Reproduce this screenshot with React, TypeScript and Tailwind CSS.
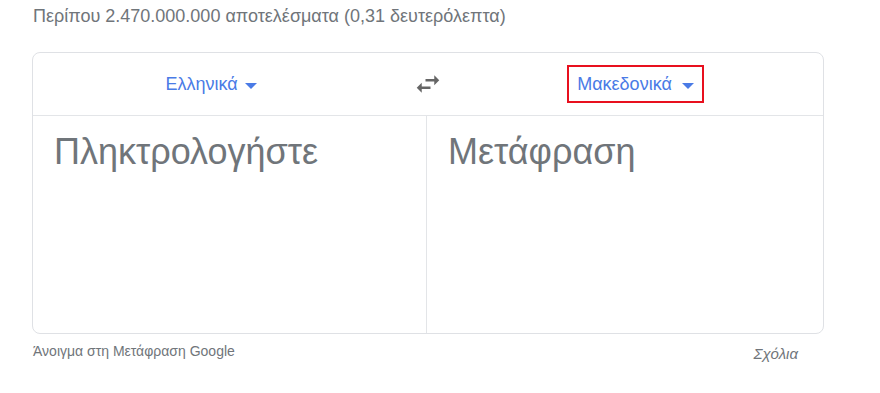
import React from "react";

function Caret() {
  return (
    <span className="inline-block w-0 h-0 border-l-[6px] border-r-[6px] border-t-[6px] border-l-transparent border-r-transparent border-t-[#4a7be6] mt-[3px]" />
  );
}

function SwapIcon() {
  return (
    <svg width="30" height="30" viewBox="0 0 24 24" fill="#666666">
      <path d="M6.99 11L3 15l3.99 4v-3H14v-2H6.99v-3zM21 9l-3.99-4v3H10v2h7.01v3L21 9z" />
    </svg>
  );
}

export default function App() {
  return (
    <div
      className="w-[880px] h-[393px] bg-white overflow-hidden"
      style={{ fontFamily: '"Liberation Sans", Arial, sans-serif' }}
    >
      <div className="pl-[33px] pt-[5px] text-[18px] leading-[22px] text-[#70757a]">
        Περίπου 2.470.000.000 αποτελέσματα (0,31 δευτερόλεπτα)
      </div>
      <div className="ml-[32px] mt-[25px] w-[792px] h-[282px] border border-[#dfe1e5] rounded-[8px] flex flex-col">
        <div className="h-[63px] border-b border-[#e3e5e8] flex items-center">
          <div className="w-[356px] flex items-center justify-center">
            <div className="flex items-center gap-[7px] text-[18px] text-[#4a7be6]">
              <span>Ελληνικά</span>
              <Caret />
            </div>
          </div>
          <div className="w-[78px] flex items-center justify-center">
            <SwapIcon />
          </div>
          <div className="flex-1 flex items-center justify-center pr-[19px]">
            <div className="flex items-center gap-[10px] text-[18px] text-[#4a7be6] border-2 border-[#e8101e] h-[38px] px-[8px]">
              <span>Μακεδονικά</span>
              <Caret />
            </div>
          </div>
        </div>
        <div className="flex-1 flex">
          <div className="w-[394px] border-r border-[#e3e5e8] pl-[21px] pt-[14px] text-[36px] leading-[44px] text-[#70757a]">
            Πληκτρολογήστε
          </div>
          <div className="flex-1 pl-[21px] pt-[14px] text-[36px] leading-[44px] text-[#70757a]">
            Μετάφραση
          </div>
        </div>
      </div>
      <div className="ml-[33px] w-[765px] mt-[9px] flex justify-between text-[14px] leading-[16px] text-[#70757a]">
        <span>Άνοιγμα στη Μετάφραση Google</span>
        <span className="italic pt-[3px] text-[15px]">Σχόλια</span>
      </div>
    </div>
  );
}
